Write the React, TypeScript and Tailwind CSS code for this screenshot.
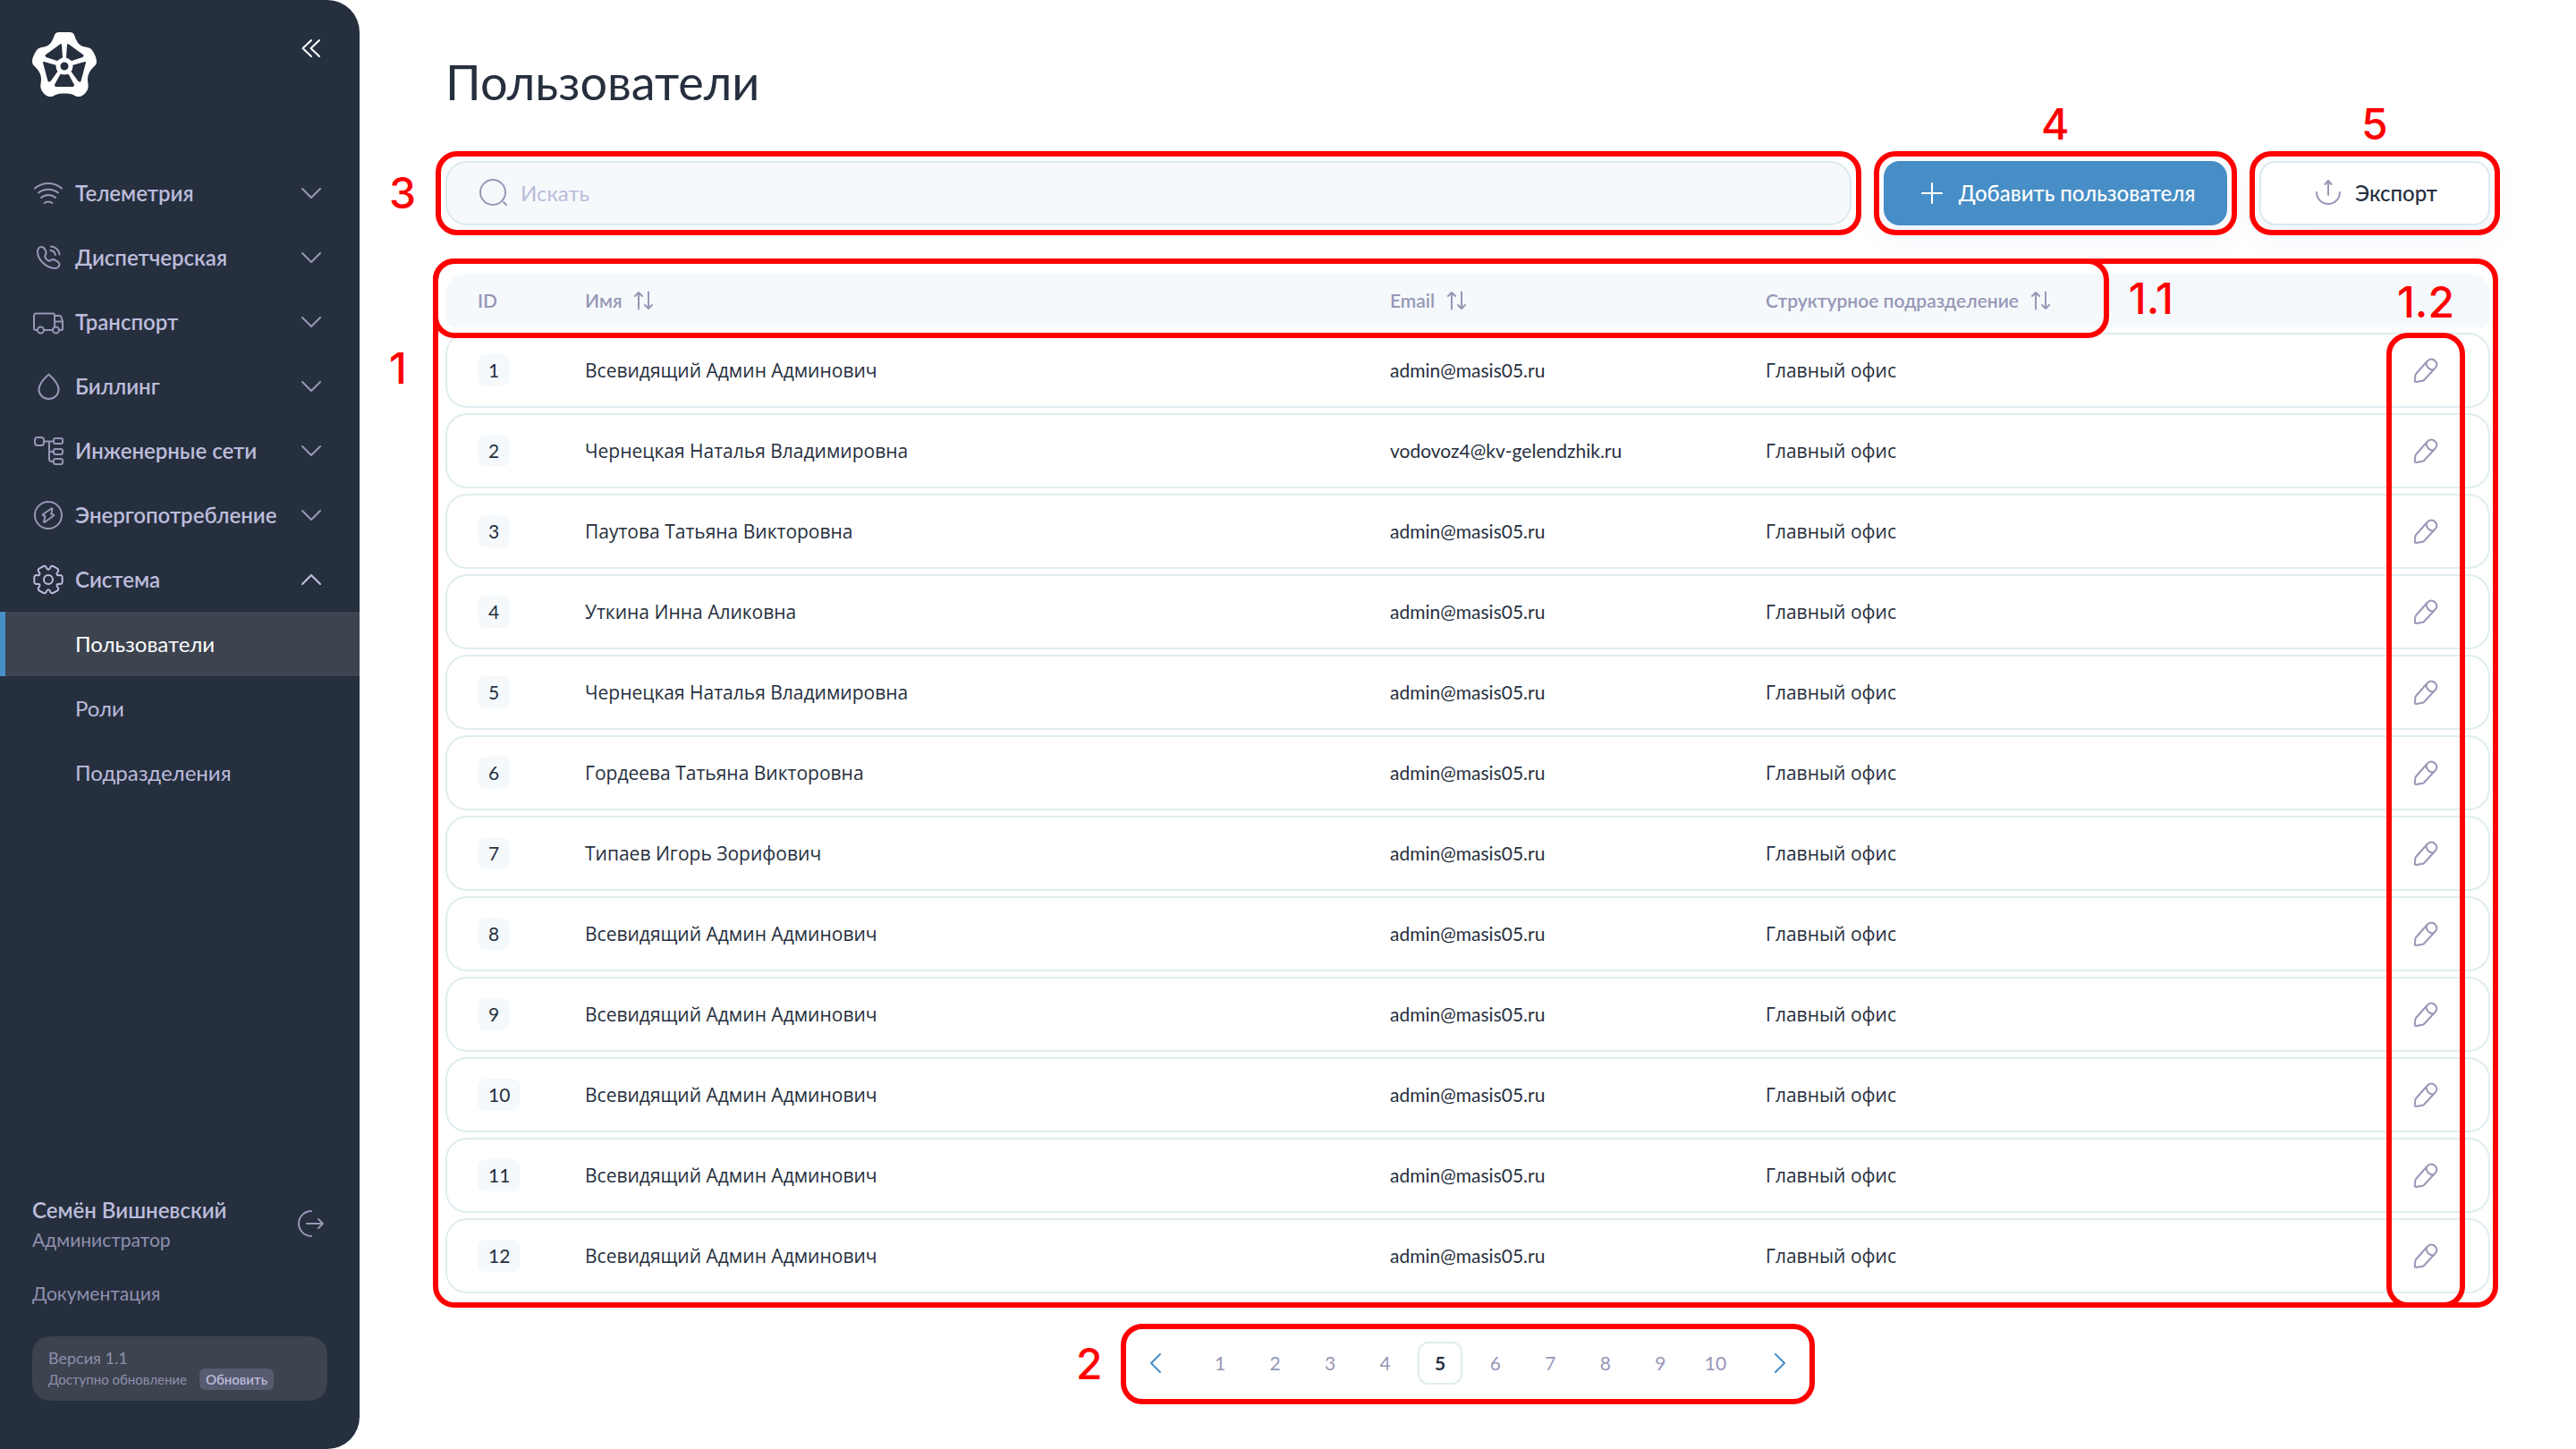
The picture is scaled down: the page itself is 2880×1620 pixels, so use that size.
import { ReactNode } from "react";

const purple = "#9797b6";

const users = [
    { name: "Всевидящий Админ Админович", email: "admin@masis05.ru" },
    { name: "Чернецкая Наталья Владимировна", email: "vodovoz4@kv-gelendzhik.ru" },
    { name: "Паутова Татьяна Викторовна", email: "admin@masis05.ru" },
    { name: "Уткина Инна Аликовна", email: "admin@masis05.ru" },
    { name: "Чернецкая Наталья Владимировна", email: "admin@masis05.ru" },
    { name: "Гордеева Татьяна Викторовна", email: "admin@masis05.ru" },
    { name: "Типаев Игорь Зорифович", email: "admin@masis05.ru" },
    { name: "Всевидящий Админ Админович", email: "admin@masis05.ru" },
    { name: "Всевидящий Админ Админович", email: "admin@masis05.ru" },
    { name: "Всевидящий Админ Админович", email: "admin@masis05.ru" },
    { name: "Всевидящий Админ Админович", email: "admin@masis05.ru" },
    { name: "Всевидящий Админ Админович", email: "admin@masis05.ru" },
];

interface IIcon {
    size?: number;
    color?: string;
    children: ReactNode;
}

function Icon({ size = 36, color = purple, children }: IIcon) {
    return (
        <svg
            width={size}
            height={size}
            viewBox={`0 0 ${size} ${size}`}
            fill="none"
            stroke={color}
            strokeWidth="2"
            strokeLinecap="round"
            strokeLinejoin="round"
            className="shrink-0"
            aria-hidden="true"
        >
            {children}
        </svg>
    );
}

const polar = (r: number, deg: number) => {
    const a = (deg * Math.PI) / 180;
    return `${(18 + r * Math.cos(a)).toFixed(2)} ${(18 + r * Math.sin(a)).toFixed(2)}`;
};

// six rounded teeth around the centre
const gear =
    [0, 60, 120, 180, 240, 300]
        .map(
            (a, i) =>
                `${i === 0 ? "M" : `Q${polar(10, a - 30)} `}${polar(12.6, a - 22)}Q${polar(17, a - 20)} ${polar(15.8, a - 6)}L${polar(15.8, a + 6)}Q${polar(17, a + 20)} ${polar(12.6, a + 22)}`
        )
        .join("") + `Q${polar(10, 330)} ${polar(12.6, 338)}Z`;

const menu = [
    {
        label: "Телеметрия",
        icon: (
            <>
                <path d="M3 12.5C12 5 24 5 33 12.5" />
                <path d="M7 17.5c6.5-5 15.5-5 22 0" />
                <path d="M10 23c4.5-4 11.5-4 16 0" />
                <path d="M13.5 29c2.5-2 6.5-2 9 0" />
            </>
        ),
    },
    {
        label: "Диспетчерская",
        icon: (
            <>
                <path d="M6 11.5C6 7.500 8.500 6 10.500 6c1.800 0 3 1.300 4 3.200 1.200 2.300 1.800 3.600.6 5.300-1.500 2-1.200 3.400.8 5.400 2.200 2.200 3.600 2.300 5.300.8 1.800-1.200 3.300-.7 5.500.7 2.500 1.500 4 2.600 3.800 4.600C30 28.500 28 30 24.500 30 15 29 6 20 6 11.500z" />
                <path d="M21 5.500c5 .3 9 4 9.500 9" />
                <path d="M20.500 10c3 .3 5 2.300 5.300 5" />
            </>
        ),
    },
    {
        label: "Транспорт",
        icon: (
            <>
                <path d="M5.500 27H4a2 2 0 0 1-2-2V10.500a2 2 0 0 1 2-2h19.500a1.500 1.500 0 0 1 1.500 1.500V23M13 27h10M25 11h5.500c1 0 1.600.6 1.900 1.500L34 17v8.500a1.500 1.500 0 0 1-1.500 1.500H30M25 17.500h9" />
                <circle cx="9.500" cy="27" r="3.500" />
                <circle cx="26.500" cy="27" r="3.500" />
            </>
        ),
    },
    {
        label: "Биллинг",
        icon: <path d="M18.500 4.500C14 8.500 7.500 15 7.500 21.500c0 6 5 10.500 11 10.500s11-4.500 11-10.500c0-6.500-6.500-13-11-17z" />,
    },
    {
        label: "Инженерные сети",
        icon: (
            <>
                <rect x="3" y="3" width="10" height="9" rx="3" />
                <rect x="24" y="4" width="10" height="6" rx="2" />
                <rect x="24" y="16" width="10" height="6" rx="2" />
                <rect x="24" y="27" width="10" height="6" rx="2" />
                <path d="M13 7.500h11M19 7.500V27a3 3 0 0 0 3 3h2M19 19h5" />
            </>
        ),
    },
    {
        label: "Энергопотребление",
        icon: (
            <>
                <circle cx="18" cy="18" r="15" />
                <path d="M21.500 10.500 12 17c-.6.4-.4 1 .3 1.200l2.200.5-1.400 6.500c0 .8.5.9 1 .5L24 18.500c.5-.5.2-1-.4-1.200l-2.300-.4 1.200-5.600c.1-.8-.4-1.100-1-.8z" />
            </>
        ),
    },
];

function Chevron({ up }: { up?: boolean }) {
    return (
        <Icon size={24} color={up ? "#c3c3e0" : purple}>
            {up ? <path d="M2 17 12 7l10 10" /> : <path d="M2 7l10 10L22 7" />}
        </Icon>
    );
}

function Logo() {
    return (
        <svg width="72" height="72" viewBox="0 0 72 72" aria-label="Логотип">
            <path
                fill="#fff"
                d="M30 0h12c2.500 0 4.200 1 5 3 2 6.500 5 11.500 10 13 3 .8 7 .8 9 3 3 3 6 10 6 14 0 3-2 4.500-4 6.500-4 4-6 8-6 13 0 4 1.500 8 0 11.500-1.500 3.500-5 7-8.500 8-4 1-6-1.500-9-2.500-4-1.200-13-1.200-17 0-3 1-5 3.500-9 2.500-3.500-1-7-4.500-8.500-8-1.500-3.500 0-7.500 0-11.500 0-5-2-9-6-13-2-2-4-3.500-4-6.500 0-4 3-11 6-14 2-2.200 6-2.200 9-3 5-1.500 8-6.500 10-13 .8-2 2.500-3 5-3z"
            />
            <g fill="#262f3e" stroke="#262f3e" strokeWidth="2" strokeLinejoin="round">
                <path d="m32 14 1 14-5 3-12-4-.5-1z" />
                <path d="m40 14-1 14 5 3 12-4 .5-1z" />
                <path d="m13 34 14 4 1 5-8 11-1.500.500z" />
                <path d="m59 34-14 4-1 5 8 11 1.500.500z" />
                <path d="m26 59 6-11h8l6 11-.5 1h-19z" />
            </g>
            <circle cx="36" cy="38" r="7" fill="#262f3e" stroke="#fff" strokeWidth="5" />
        </svg>
    );
}

function Sidebar() {
    return (
        <aside className="flex w-[402px] shrink-0 flex-col rounded-r-[36px] bg-[#262f3e] text-[#bcbcdb]">
            <div className="flex items-start justify-between px-9 pt-9">
                <Logo />
                <button type="button" aria-label="Свернуть меню" className="mt-1.5">
                    <Icon size={36} color="#fff">
                        <path d="M18 3 8.500 12l9.500 9M27 3l-9.500 9 9.500 9" />
                    </Icon>
                </button>
            </div>
            <nav className="mt-[72px] flex flex-col text-[24px] leading-[30px]">
                {menu.map((item) => (
                    <button key={item.label} type="button" className="flex h-[72px] items-center gap-3 pr-[42px] pl-9 font-semibold">
                        <Icon>{item.icon}</Icon>
                        <span className="flex-1 text-left">{item.label}</span>
                        <Chevron />
                    </button>
                ))}
                <button type="button" aria-expanded="true" className="flex h-[72px] items-center gap-3 pr-[42px] pl-9 font-semibold">
                    <Icon color="#bcbcdb">
                        <path d={gear} />
                        <circle cx="18" cy="18" r="5" />
                    </Icon>
                    <span className="flex-1 text-left">Система</span>
                    <Chevron up />
                </button>
                <a href="#users" className="flex h-[72px] items-center border-l-6 border-[#478ec6] bg-[#3d434f] pl-[78px] text-white">
                    Пользователи
                </a>
                <a href="#roles" className="flex h-[72px] items-center pl-[84px]">
                    Роли
                </a>
                <a href="#departments" className="flex h-[72px] items-center pl-[84px]">
                    Подразделения
                </a>
            </nav>
            <div className="mt-auto px-9 pb-[54px] text-[#8f8fae]">
                <div className="flex items-center justify-between">
                    <div>
                        <p className="text-[24px] leading-[36px] font-semibold text-[#bcbcdb]">Семён Вишневский</p>
                        <p className="text-[21px] leading-[30px]">Администратор</p>
                    </div>
                    <button type="button" aria-label="Выйти">
                        <Icon>
                            <path d="M18 4a14 14 0 0 0 0 28M13 18h18M26 13l5 5-5 5" />
                        </Icon>
                    </button>
                </div>
                <a href="#docs" className="mt-[30px] block text-[21px] leading-[30px]">
                    Документация
                </a>
                <div className="mt-[33px] h-[72px] rounded-[20px] bg-[#3d434f] px-[18px] pt-3">
                    <p className="text-[18px] leading-6">Версия 1.1</p>
                    <div className="flex items-center gap-3.5">
                        <span className="text-[15px] leading-6">Доступно обновление</span>
                        <button type="button" className="h-6 rounded-md bg-[#575b6f] px-[7px] text-[15px] font-semibold text-[#bcbcdb]">
                            Обновить
                        </button>
                    </div>
                </div>
            </div>
        </aside>
    );
}

// red frame laid over a part of the page
function Frame({ className, label, labelClass }: { className: string; label: string; labelClass: string }) {
    return (
        <>
            <div className={`pointer-events-none absolute z-10 rounded-[24px] border-6 border-[#f00] ${className}`} />
            <span className={`absolute z-10 font-[Inter,sans-serif] text-[48px] leading-[48px] font-medium text-[#f00] ${labelClass}`}>{label}</span>
        </>
    );
}

function SortHeader({ label }: { label: string }) {
    return (
        <button type="button" className="flex items-center gap-3 font-semibold">
            {label}
            <Icon size={24}>
                <path d="M7 21.500V3M3 7l4-4 4 4M18 2.500V21M14 17l4 4 4-4" />
            </Icon>
        </button>
    );
}

function UsersTable() {
    return (
        <div className="relative mt-12">
            <table className="w-full table-fixed border-separate border-spacing-x-0 border-spacing-y-[6px] text-[21px] leading-[30px]">
                <colgroup>
                    <col className="w-[156px]" />
                    <col />
                    <col className="w-[420px]" />
                    <col className="w-[630px]" />
                    <col className="w-[180px]" />
                </colgroup>
                <thead>
                    <tr className="h-[60px] text-left text-[#9797b6] [&>th]:bg-[#f5f9fc] [&>th]:font-semibold">
                        <th className="rounded-tl-[24px] rounded-bl-[12px] pl-9">ID</th>
                        <th>
                            <SortHeader label="Имя" />
                        </th>
                        <th>
                            <SortHeader label="Email" />
                        </th>
                        <th>
                            <SortHeader label="Структурное подразделение" />
                        </th>
                        <th className="rounded-tr-[24px] rounded-br-[12px]" aria-label="Действия" />
                    </tr>
                </thead>
                <tbody>
                    {users.map((user, i) => (
                        <tr key={i} className="h-[84px] [&>td]:border-y-2 [&>td]:border-[#e0edf0]">
                            <td className="rounded-l-[24px] border-l-2 pl-[34px]">
                                <span className="inline-flex h-9 items-center rounded-[9px] bg-[#f5f9fc] px-3">{i + 1}</span>
                            </td>
                            <td className="font-['Open_Sans',sans-serif]">{user.name}</td>
                            <td>{user.email}</td>
                            <td className="font-['Open_Sans',sans-serif]">Главный офис</td>
                            <td className="rounded-r-[24px] border-r-2 pr-[52px]">
                                <button type="button" aria-label="Редактировать" className="ml-auto flex">
                                    <Icon>
                                        <path d="M7.500 21.500 19.500 8c3-3.500 6.500-3 9-.5s2.500 5.500 0 8L15.500 29.500l-8 1.500c-1.500 0-1.700-.5-1.700-1.500l.5-5.500q.2-1.500 1.200-2.500z" />
                                        <path d="M18.500 9.500c0 4.500 3.500 8 8 8" />
                                    </Icon>
                                </button>
                            </td>
                        </tr>
                    ))}
                </tbody>
            </table>
            <Frame className="-top-[11px] -right-[9px] -bottom-[10px] -left-[14px]" label="1" labelClass="-left-[63px] top-[88px]" />
            <Frame className="-top-[11px] right-[426px] -left-[14px] h-[89px]" label="1.1" labelClass="right-[354px] top-[10px]" />
            <Frame className="top-[72px] right-[28px] -bottom-[10px] w-[88px]" label="1.2" labelClass="right-[40px] top-[14px]" />
        </div>
    );
}

function Pagination() {
    return (
        <nav aria-label="Страницы" className="relative mx-auto mt-7 flex h-[90px] w-[776px] items-center justify-between px-[28px] pb-[2px] text-[21px]">
            <button type="button" aria-label="Назад">
                <Icon size={24} color="#478ec6">
                    <path d="M16 2 6 12l10 10" />
                </Icon>
            </button>
            <div className="flex w-[604px] justify-between">
                {[1, 2, 3, 4, 5, 6, 7, 8, 9, 10].map((page) => (
                    <button
                        key={page}
                        type="button"
                        className={`h-12 w-[50px] rounded-[12px] ${page === 5 ? "border-2 border-[#e0edf0] font-bold text-[#262f3e]" : "text-[#9797b6]"}`}
                    >
                        {page}
                    </button>
                ))}
            </div>
            <button type="button" aria-label="Вперёд">
                <Icon size={24} color="#478ec6">
                    <path d="m8 2 10 10L8 22" />
                </Icon>
            </button>
            <Frame className="inset-0" label="2" labelClass="-left-[50px] top-[21px]" />
        </nav>
    );
}

export default function App() {
    return (
        <div className="flex min-h-screen bg-white font-[Lato,sans-serif] text-[#262f3e]">
            <Sidebar />
            <main className="min-w-0 flex-1 pt-14 pr-24 pb-12 pl-24">
                <h1 className="text-[54px] leading-[72px]">Пользователи</h1>
                <div className="mt-[52px] flex gap-9 text-[24px]">
                    <div className="relative flex-1">
                        <label className="flex h-[72px] items-center gap-3 rounded-[24px] border-2 border-[#dbeaee] bg-[#f5f9fc] px-[34px]">
                            <Icon>
                                <circle cx="17" cy="17" r="14" />
                                <path d="m29 28 3 3" />
                            </Icon>
                            <input
                                type="search"
                                aria-label="Поиск"
                                placeholder="Искать"
                                className="min-w-0 flex-1 bg-transparent outline-none placeholder:text-[#bcbcdb]"
                            />
                        </label>
                        <Frame className="-inset-[11px]" label="3" labelClass="-left-[63px] top-3" />
                    </div>
                    <div className="relative">
                        <button type="button" className="flex h-[72px] w-[384px] items-center justify-center gap-3 rounded-[18px] bg-[#478ec6] font-medium text-white shadow-[0_12px_36px_rgba(71,100,198,0.08)]">
                            <Icon color="#fff">
                                <path d="M18 7v22M7 18h22" />
                            </Icon>
                            Добавить пользователя
                        </button>
                        <Frame className="-inset-[11px]" label="4" labelClass="left-[176px] -top-[65px]" />
                    </div>
                    <div className="relative">
                        <button type="button" className="flex h-[72px] w-[258px] items-center justify-center gap-3 rounded-[18px] border-2 border-[#dbeaee] bg-white font-medium shadow-[0_12px_36px_rgba(71,100,198,0.08)]">
                            <Icon>
                                <path d="M18 20V4M14.500 8 18 4l3.500 4M5 17a13 13 0 0 0 26 0" />
                            </Icon>
                            Экспорт
                        </button>
                        <Frame className="-inset-[11px]" label="5" labelClass="left-[114px] -top-[65px]" />
                    </div>
                </div>
                <UsersTable />
                <Pagination />
            </main>
        </div>
    );
}
